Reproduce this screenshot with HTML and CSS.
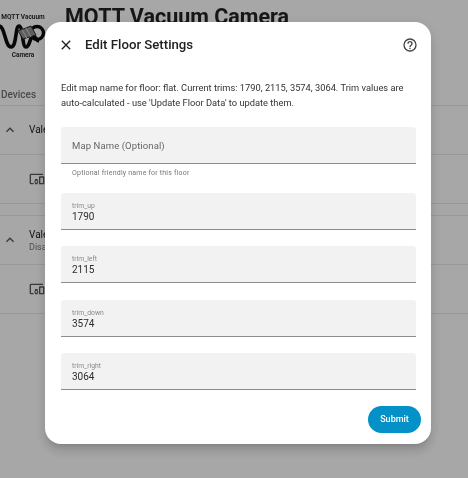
FILE: index.html
```
<!DOCTYPE html>
<html lang="en">
<head>
<meta charset="utf-8">
<title>Edit Floor Settings</title>
<link rel="stylesheet" href="styles.css">
</head>
<body>
<div class="page">
  <header class="head">
    <div class="logo">
      <span class="logo-text">MQTT Vacuum</span>
      <svg class="logo-mark" viewBox="0 0 46 28" width="46" height="28" aria-hidden="true">
        <path d="M-1 4c6 0 6 21 12 21S15 4 19 4s3 21 7 21 4-11 7-11 3 5 6 5" fill="none" stroke="#0c0c0c" stroke-width="3.600"/>
        <circle cx="37" cy="11" r="6.500" fill="none" stroke="#0c0c0c" stroke-width="3.400"/>
        <path d="M18 9l13-5 5 9-13 4z" fill="#8c8c8c" stroke="#2a2a2a" stroke-width="1"/>
        <path d="M22 7.500l5 9M26 6l5 9" stroke="#d0d0d0" stroke-width="1"/>
      </svg>
      <span class="logo-text">Camera</span>
    </div>
    <h1 class="page-title">MQTT Vacuum Camera</h1>
  </header>
  <div class="section-label">Devices</div>
  <section class="group">
    <div class="row main-row">
      <svg class="chev" viewBox="0 0 24 24" width="16" height="16"><path d="M7.400 15.400 12 10.800l4.600 4.600L18 14l-6-6-6 6z"/></svg>
      <div class="row-text"><div>Valetudo</div></div>
    </div>
    <div class="row device-row">
      <svg class="dev" viewBox="0 0 24 24" width="16" height="16"><path d="M3 6h18V4H3a2 2 0 0 0-2 2v12a2 2 0 0 0 2 2h4v-2H3V6zm10 6H9v1.800A3 3 0 0 0 8 16a3 3 0 0 0 1 2.200V20h4v-1.800A3 3 0 0 0 14 16a3 3 0 0 0-1-2.200V12zm-2 5.500a1.500 1.500 0 1 1 0-3 1.500 1.500 0 0 1 0 3zM22 8h-6a1 1 0 0 0-1 1v10a1 1 0 0 0 1 1h6a1 1 0 0 0 1-1V9a1 1 0 0 0-1-1zm-1 10h-4v-8h4v8z"/></svg>
    </div>
  </section>
  <section class="group second">
    <div class="row main-row">
      <svg class="chev" viewBox="0 0 24 24" width="16" height="16"><path d="M7.400 15.400 12 10.800l4.600 4.600L18 14l-6-6-6 6z"/></svg>
      <div class="row-text two-line"><div>Valetudo</div><div class="sub">Disabled</div></div>
    </div>
    <div class="row device-row">
      <svg class="dev" viewBox="0 0 24 24" width="16" height="16"><path d="M3 6h18V4H3a2 2 0 0 0-2 2v12a2 2 0 0 0 2 2h4v-2H3V6zm10 6H9v1.800A3 3 0 0 0 8 16a3 3 0 0 0 1 2.200V20h4v-1.800A3 3 0 0 0 14 16a3 3 0 0 0-1-2.200V12zm-2 5.500a1.500 1.500 0 1 1 0-3 1.500 1.500 0 0 1 0 3zM22 8h-6a1 1 0 0 0-1 1v10a1 1 0 0 0 1 1h6a1 1 0 0 0 1-1V9a1 1 0 0 0-1-1zm-1 10h-4v-8h4v8z"/></svg>
    </div>
  </section>
</div>

<div class="scrim"></div>

<div class="dialog" role="dialog">
  <div class="dialog-head">
    <svg class="icon" viewBox="0 0 24 24" width="16" height="16"><path d="M19 6.410 17.590 5 12 10.590 6.410 5 5 6.410 10.590 12 5 17.590 6.410 19 12 13.410 17.590 19 19 17.590 13.410 12z"/></svg>
    <h2 class="dialog-title">Edit Floor Settings</h2>
    <svg class="icon help" viewBox="0 0 24 24" width="16" height="16"><path d="M11 18h2v-2h-2v2zm1-16a10 10 0 1 0 0 20 10 10 0 0 0 0-20zm0 18a8 8 0 1 1 0-16 8 8 0 0 1 0 16zm0-14a4 4 0 0 0-4 4h2a2 2 0 1 1 4 0c0 2-3 1.750-3 5h2c0-2.250 3-2.500 3-5a4 4 0 0 0-4-4z"/></svg>
  </div>
  <p class="intro">Edit map name for floor: flat. Current trims: 1790, 2115, 3574, 3064. Trim values are auto-calculated - use 'Update Floor Data' to update them.</p>
  <div class="field empty"><span class="placeholder">Map Name (Optional)</span></div>
  <div class="helper">Optional friendly name for this floor</div>
  <div class="fields">
    <div class="field"><span class="label">trim_up</span><span class="value">1790</span></div>
    <div class="field"><span class="label">trim_left</span><span class="value">2115</span></div>
    <div class="field"><span class="label">trim_down</span><span class="value">3574</span></div>
    <div class="field"><span class="label">trim_right</span><span class="value">3064</span></div>
  </div>
  <div class="actions"><button class="submit" type="button">Submit</button></div>
</div>
</body>
</html>
```
FILE: styles.css
```
html, body {
  margin: 0;
  padding: 0;
  width: 468px;
  height: 478px;
  overflow: hidden;
  background: #f6f6f6;
  font-family: Roboto, "Liberation Sans", sans-serif;
  color: #212121;
}

.page { height: 478px; overflow: hidden; transform: translateZ(0); }

.head { display: flex; height: 84px; }

.logo {
  width: 46px;
  padding-top: 13px;
  display: flex;
  flex-direction: column;
  align-items: center;
  flex: none;
}
.logo-text { font-size: 6.500px; font-weight: 700; line-height: 8px; white-space: nowrap; color: #2a2a2a; }
.logo-mark { display: block; margin: 1px 0 1px; }

.page-title {
  margin: 0 0 0 19px;
  font-size: 21.500px;
  font-weight: 700;
  line-height: 32px;
  white-space: nowrap;
  color: #212121;
  padding-top: 1px;
}

.section-label {
  height: 21px;
  padding-left: 1px;
  font-size: 10px;
  font-weight: 500;
  line-height: 22px;
  color: #6f6f6f;
  border-bottom: 1px solid #e0e0e0;
}

.group { border-bottom: 1px solid #e0e0e0; }
.second { margin-top: 11px; border-top: 1px solid #e0e0e0; }

.row { display: flex; align-items: center; }
.main-row { height: 48px; border-bottom: 1px solid #e0e0e0; }
.device-row { height: 48px; padding-left: 29px; }

.chev { margin-left: 2px; fill: #555; flex: none; }
.row-text { margin-left: 11px; font-size: 10px; line-height: 12px; }
.two-line { padding-top: 2px; }
.sub { color: #757575; font-size: 9px; }
.dev { fill: #555; }

.scrim {
  position: fixed;
  inset: 0;
  background: rgba(0, 0, 0, 0.32);
}

.dialog {
  position: fixed;
  left: 45px;
  top: 22px;
  width: 386px;
  height: 422px;
  box-sizing: border-box;
  padding: 0 15px 0 16px;
  background: #fff;
  border-radius: 16px;
  box-shadow: 0 8px 10px 1px rgba(0,0,0,.08), 0 3px 14px 2px rgba(0,0,0,.07), 0 5px 5px -3px rgba(0,0,0,.12);
}

.dialog-head {
  display: flex;
  align-items: center;
  height: 45px;
}
.icon { fill: #212121; flex: none; }
.dialog-head .icon:first-child { margin-left: -3px; }
.dialog-title {
  margin: 0 0 0 11px;
  flex: 1;
  font-size: 13.200px;
  font-weight: 500;
  line-height: 16px;
  color: #212121;
}
.help { fill: #444; margin-right: -2px; }

.intro {
  margin: 13px 0 0;
  font-size: 9.300px;
  line-height: 15px;
  color: #333;
}

.field {
  box-sizing: border-box;
  height: 37px;
  padding: 9px 11px 0;
  background: #f2f2f2;
  border-radius: 3px 3px 0 0;
  border-bottom: 1px solid #8c8c8c;
  display: flex;
  flex-direction: column;
}
.empty { height: 37px; margin-top: 17px; justify-content: center; padding-top: 0; }

.placeholder { font-size: 9.500px; color: #666; letter-spacing: .1px; }
.label { font-size: 6.800px; line-height: 9px; color: #8a8a8a; }
.value { font-size: 10px; line-height: 12px; color: #2c2c2c; }

.helper {
  margin-top: 4px;
  height: 12px;
  padding-left: 11px;
  font-size: 7px;
  line-height: 10px;
  color: #777;
  letter-spacing: .2px;
}

.fields { margin-top: 13px; display: flex; flex-direction: column; gap: 16.330px; }

.actions { display: flex; justify-content: flex-end; margin: 16px -5px 0 0; }
.submit {
  width: 53px;
  height: 27px;
  border: 0;
  border-radius: 14px;
  background: #0391c8;
  color: #fff;
  font: 500 9px Roboto, sans-serif;
  padding: 0;
}
```
